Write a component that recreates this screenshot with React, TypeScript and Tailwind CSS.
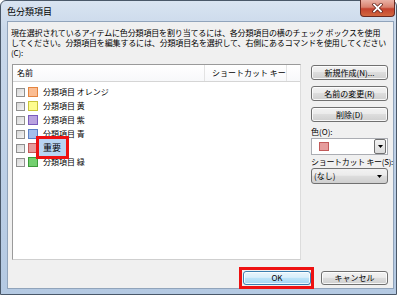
import React from 'react'

const font = "font-['Noto_Sans_CJK_JP',sans-serif]"

const categories = [
  { name: '分類項目 オレンジ', fill: '#fbbd92', border: '#e4843f' },
  { name: '分類項目 黄', fill: '#fdfc8f', border: '#c9c43a' },
  { name: '分類項目 紫', fill: '#b9a3e0', border: '#7a5bbd' },
  { name: '分類項目 青', fill: '#a4bfeb', border: '#5b80c6' },
  { name: '', fill: '#e69c9c', border: '#c25a5a' },
  { name: '分類項目 緑', fill: '#73d06f', border: '#3d9a3a' },
]

function WinButton({ children, primary }: { children: React.ReactNode; primary?: boolean }) {
  return (
    <div
      className={`w-full h-full flex items-center justify-center rounded-[3px] border text-[8px] leading-none text-black shadow-[inset_0_0_0_1px_rgba(255,255,255,0.8)] ${
        primary
          ? 'border-[#3c7fb1] bg-[linear-gradient(#e8f5fc_0%,#d9effc_45%,#bde4f9_50%,#a3d6f3_100%)]'
          : 'border-[#707070] bg-[linear-gradient(#f2f2f2_0%,#ebebeb_45%,#dddddd_50%,#cfcfcf_100%)]'
      }`}
    >
      {children}
    </div>
  )
}

function Arrow() {
  return (
    <svg width="5" height="3" viewBox="0 0 5 3">
      <polygon points="0,0 5,0 2.5,3" fill="#000" />
    </svg>
  )
}

export default function App() {
  return (
    <div className={`w-[400px] h-[296px] bg-white ${font} text-black`}>
      <div className="w-[397px] h-[295px] rounded-t-[6px] border border-[#4a5869] bg-[linear-gradient(#d9e4f1_0%,#c9d8ea_10%,#bccfe6_60%,#b4c9e2_100%)] flex flex-col">
        {/* Title bar */}
        <div className="h-[20px] flex items-start">
          <div className="pl-[6px] pt-[5px] text-[9px] leading-[12px] text-black">色分類項目</div>
          <div className="ml-auto -mt-[1px] mr-[1px] w-[35px] h-[17px] rounded-b-[4px] border border-[#6b2a22] border-t-0 bg-[linear-gradient(#eab2a6_0%,#d9826f_45%,#c5432f_55%,#d2673f_100%)] flex items-center justify-center">
            <svg width="11" height="10" viewBox="0 0 11 10">
              <path d="M2 1.5 L9 8.5 M9 1.5 L2 8.5" stroke="#5a1a12" strokeWidth="3.2" strokeLinecap="square" />
              <path d="M2 1.5 L9 8.5 M9 1.5 L2 8.5" stroke="#fff" strokeWidth="1.8" strokeLinecap="square" />
            </svg>
          </div>
        </div>

        {/* Client area */}
        <div className="ml-[6px] mr-[2px] h-[268px] border border-[#91a4bb] bg-[#f0f0f0] flex flex-col">
          <div className="pt-[6px] pl-[3px] text-[8px] leading-[10px] tracking-[-0.15px]">
            <div className="whitespace-nowrap overflow-hidden">現在選択されているアイテムに色分類項目を割り当てるには、各分類項目の横のチェック ボックスを使用</div>
            <div className="whitespace-nowrap overflow-hidden">してください。分類項目を編集するには、分類項目名を選択して、右側にあるコマンドを使用してください</div>
            <div className="whitespace-nowrap">(C):</div>
          </div>

          <div className="mt-[6px] pl-[4px] flex">
            {/* List box */}
            <div className="relative w-[289px] h-[196px] border border-[#9a9a9a] border-b-[#cfcfcf] border-r-[#dcdcdc] bg-white">
              <div className="h-[17px] flex border-b border-[#d5d5d5] bg-[linear-gradient(#ffffff,#f7f8fa)] text-[8px] leading-[16px]">
                <div className="w-[192px] pl-[4px] border-r border-[#e3e3e3]">名前</div>
                <div className="w-[82px] pl-[7px] border-r border-[#e3e3e3] whitespace-nowrap">ショートカット キー</div>
              </div>
              <div className="pt-[3px]">
                {categories.map((c, i) => (
                  <div key={i} className="h-[14px] flex items-center pl-[3px]">
                    <div className="w-[9px] h-[9px] border border-[#8f8f8f] bg-[linear-gradient(135deg,#d6d6d6,#f4f4f4)]" />
                    <div
                      className="ml-[3px] w-[10px] h-[10px] border"
                      style={{ backgroundColor: c.fill, borderColor: c.border }}
                    />
                    <div className="ml-[5px] text-[8px] leading-none whitespace-nowrap">{c.name}</div>
                  </div>
                ))}
              </div>
              {/* Highlighted edit box */}
              <div className="absolute left-[23px] top-[71px] w-[33px] h-[23px] border-[3px] border-[#ee1111] bg-[#b8d4f2] flex items-center pl-[4px] text-[9px] leading-none">
                重要
              </div>
            </div>

            {/* Right column */}
            <div className="ml-[10px] w-[77px] flex flex-col">
              <div className="mt-[1px] h-[15px]"><WinButton>新規作成(N)...</WinButton></div>
              <div className="mt-[6px] h-[15px]"><WinButton>名前の変更(R)</WinButton></div>
              <div className="mt-[6px] h-[15px]"><WinButton>削除(D)</WinButton></div>
              <div className="mt-[5px] text-[8px] leading-[10px]">色(O):</div>
              <div className="mt-[1px] h-[17px] border border-[#abadb3] bg-white flex items-center">
                <div className="ml-[7px] w-[10px] h-[9px] border border-[#c25a5a] bg-[#e69c9c]" />
                <div className="ml-auto mr-[1px] w-[12px] h-[15px] rounded-[2px] border border-[#707070] bg-[linear-gradient(#f2f2f2,#dcdcdc)] flex items-center justify-center">
                  <Arrow />
                </div>
              </div>
              <div className="mt-[2px] text-[8px] leading-[10px] whitespace-nowrap tracking-[-0.3px]">ショートカット キー(S):</div>
              <div className="mt-[1px] h-[16px] rounded-[3px] border border-[#707070] bg-[linear-gradient(#f2f2f2_0%,#ebebeb_45%,#dddddd_50%,#cfcfcf_100%)] flex items-center pl-[2px] pr-[5px] text-[8px] leading-none">
                (なし)
                <div className="ml-auto"><Arrow /></div>
              </div>
            </div>
          </div>

          {/* Bottom buttons */}
          <div className="mt-[11px] pr-[5px] flex justify-end">
            <div className="relative w-[68px] h-[14px]">
              <WinButton primary>OK</WinButton>
              <div className="absolute -left-[4px] -right-[3px] -top-[4px] -bottom-[4px] border-[3px] border-[#ee1111]" />
            </div>
            <div className="ml-[10px] w-[67px] h-[14px]"><WinButton>キャンセル</WinButton></div>
          </div>
        </div>
      </div>
    </div>
  )
}
